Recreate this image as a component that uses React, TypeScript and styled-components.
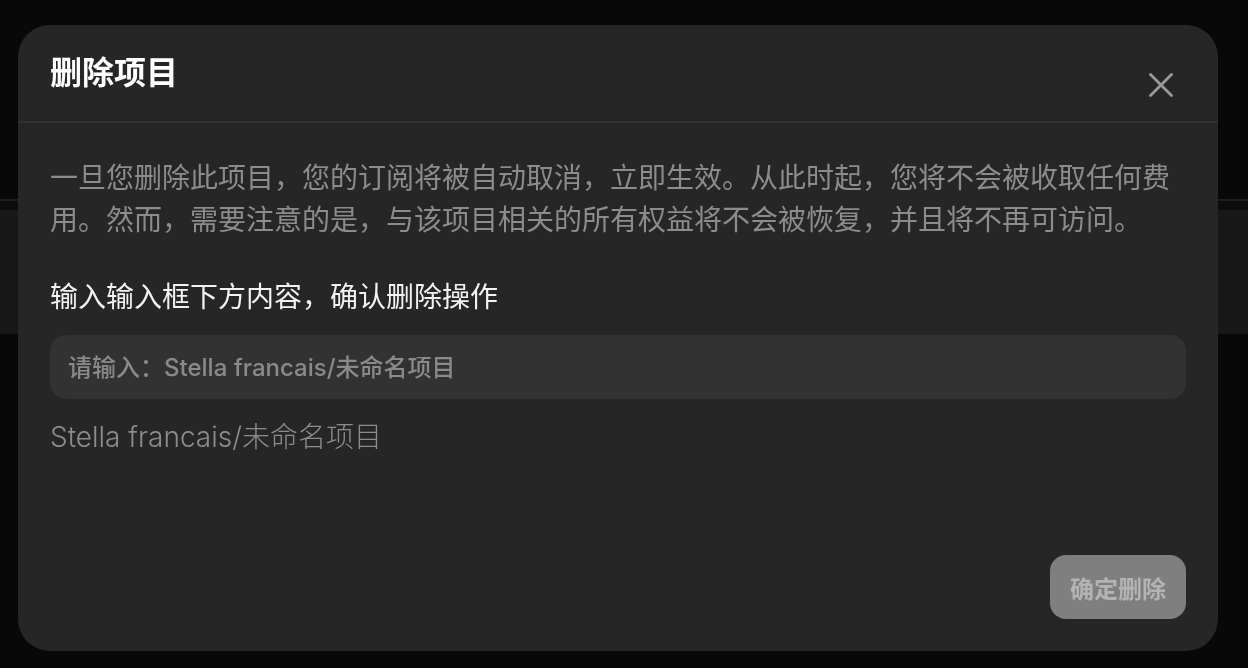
import React from "react";
import styled, { createGlobalStyle } from "styled-components";

const GlobalStyle = createGlobalStyle`
  html, body {
    margin: 0;
    padding: 0;
    background: #080808;
  }
  body {
    font-family: "Inter", "Noto Sans CJK SC", sans-serif;
  }
  * { box-sizing: border-box; }
`;

const Page = styled.div`
  width: 1248px;
  height: 668px;
  display: flex;
  flex-direction: column;
  background: #080808;
  overflow: hidden;
`;

const TopArea = styled.div`
  height: 199px;
  background: #080808;
`;

const Rule = styled.div`
  height: 2px;
  background: #1e1e1e;
`;

const Strip = styled.div`
  height: 9px;
  background: #0c0c0c;
`;

const Band = styled.div`
  height: 124px;
  background: #181818;
`;

const Overlay = styled.div`
  position: fixed;
  inset: 0;
  display: flex;
  padding: 25px 30px 17px 18px;
`;

const Dialog = styled.div`
  position: relative;
  flex: 1;
  display: flex;
  flex-direction: column;
  background: #262626;
  border-radius: 32px;
  overflow: hidden;
`;

const Header = styled.div`
  padding: 24px 32px;
  border-bottom: 2px solid #323232;
`;

const Title = styled.h2`
  margin: 0;
  font-size: 32px;
  line-height: 48px;
  font-weight: 700;
  color: #ffffff;
`;

const CloseButton = styled.button`
  position: absolute;
  top: 48px;
  right: 45px;
  width: 24px;
  height: 24px;
  padding: 0;
  border: none;
  background: transparent;
  display: flex;
  align-items: center;
  justify-content: center;
  cursor: pointer;
`;

const Body = styled.div`
  flex: 1;
  display: flex;
  flex-direction: column;
  padding: 34px 32px 32px;
`;

const Description = styled.p`
  margin: 0;
  font-size: 28px;
  line-height: 42px;
  color: #8c8c8c;
`;

const Label = styled.div`
  margin-top: 35px;
  font-size: 28px;
  line-height: 42px;
  color: #f2f2f2;
`;

const Input = styled.input`
  margin-top: 17px;
  height: 64px;
  width: 100%;
  border: none;
  outline: none;
  border-radius: 16px;
  background: #323232;
  padding: 0 18px;
  font-family: "Inter", "Noto Sans CJK SC", sans-serif;
  font-size: 24px;
  font-weight: 500;
  color: #e0e0e0;
  &::placeholder {
    color: #8a8a8a;
  }
`;

const Echo = styled.div`
  margin-top: 17px;
  font-size: 28px;
  line-height: 42px;
  font-weight: 300;
  color: #8c8c8c;
`;

const Footer = styled.div`
  margin-top: auto;
  display: flex;
  justify-content: flex-end;
`;

const ConfirmButton = styled.button`
  width: 136px;
  height: 64px;
  border: none;
  border-radius: 16px;
  background: #7f7f7f;
  color: #b4b4b4;
  font-family: "Inter", "Noto Sans CJK SC", sans-serif;
  font-size: 24px;
  font-weight: 700;
  cursor: not-allowed;
`;

export default function App() {
  return (
    <>
      <GlobalStyle />
      <Page>
        <TopArea />
        <Rule />
        <Strip />
        <Band />
      </Page>
      <Overlay>
        <Dialog>
          <Header>
            <Title>删除项目</Title>
          </Header>
          <CloseButton aria-label="关闭">
            <svg width="24" height="24" viewBox="0 0 24 24" fill="none">
              <path
                d="M1.5 1.5 L22.5 22.5 M22.5 1.5 L1.5 22.5"
                stroke="#9a9a9a"
                strokeWidth="2.8"
                strokeLinecap="round"
              />
            </svg>
          </CloseButton>
          <Body>
            <Description>
              一旦您删除此项目，您的订阅将被自动取消，立即生效。从此时起，您将不会被收取任何费用。然而，需要注意的是，与该项目相关的所有权益将不会被恢复，并且将不再可访问。
            </Description>
            <Label>输入输入框下方内容，确认删除操作</Label>
            <Input placeholder="请输入：Stella francais/未命名项目" />
            <Echo>Stella francais/未命名项目</Echo>
            <Footer>
              <ConfirmButton disabled>确定删除</ConfirmButton>
            </Footer>
          </Body>
        </Dialog>
      </Overlay>
    </>
  );
}
